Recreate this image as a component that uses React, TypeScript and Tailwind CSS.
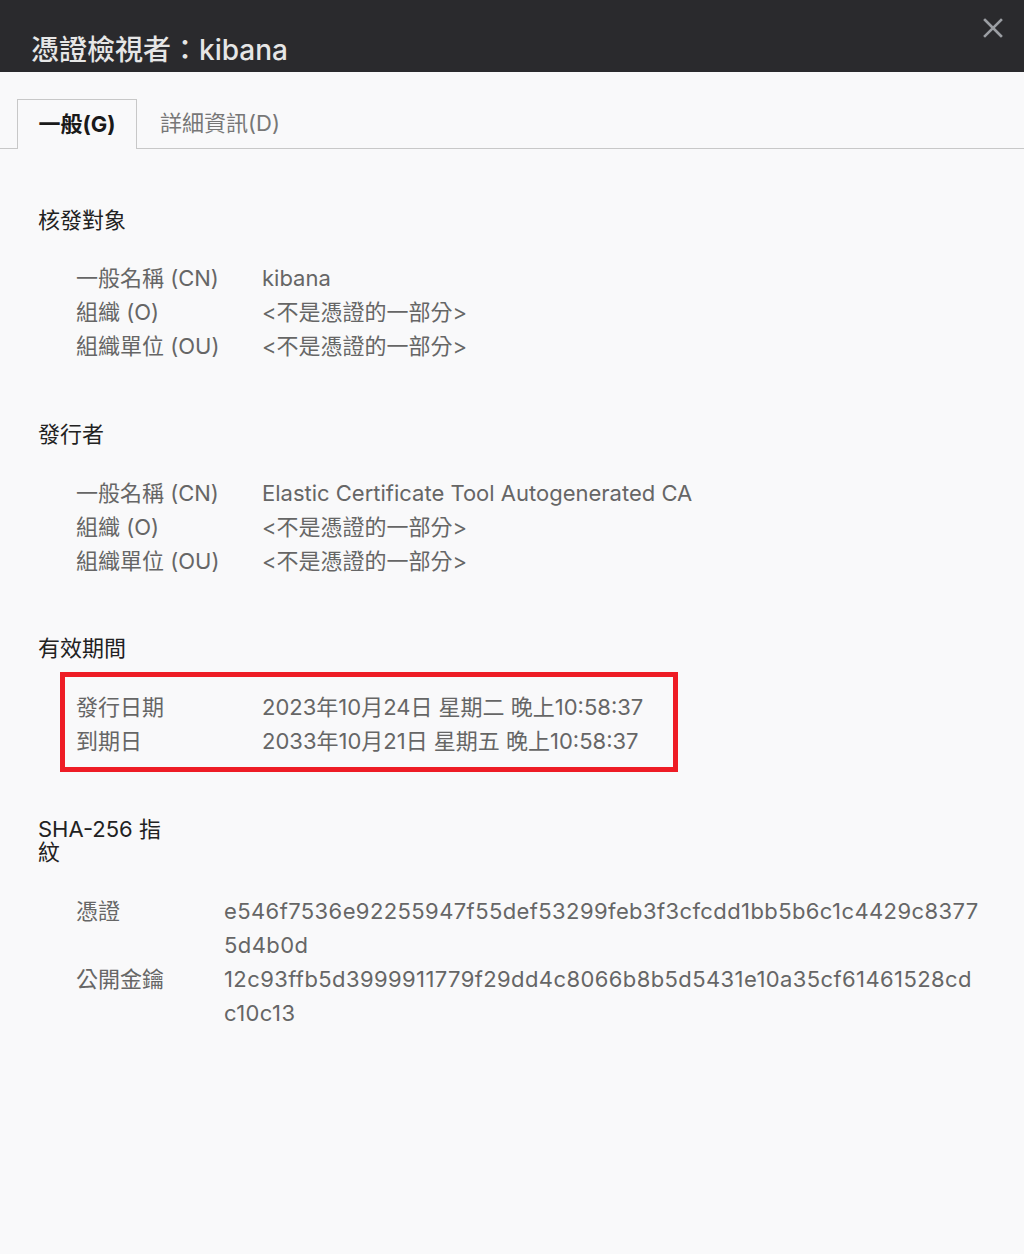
import { Fragment } from "react";

const font = {
  fontFamily: 'Inter, "Noto Sans CJK TC", sans-serif',
};

type Row = { label: string; value: string };

const subject: Row[] = [
  { label: "一般名稱 (CN)", value: "kibana" },
  { label: "組織 (O)", value: "<不是憑證的一部分>" },
  { label: "組織單位 (OU)", value: "<不是憑證的一部分>" },
];

const issuer: Row[] = [
  { label: "一般名稱 (CN)", value: "Elastic Certificate Tool Autogenerated CA" },
  { label: "組織 (O)", value: "<不是憑證的一部分>" },
  { label: "組織單位 (OU)", value: "<不是憑證的一部分>" },
];

const validity: Row[] = [
  { label: "發行日期", value: "2023年10月24日 星期二 晚上10:58:37" },
  { label: "到期日", value: "2033年10月21日 星期五 晚上10:58:37" },
];

const fingerprints: Row[] = [
  {
    label: "憑證",
    value: "e546f7536e92255947f55def53299feb3f3cfcdd1bb5b6c1c4429c83775d4b0d",
  },
  {
    label: "公開金鑰",
    value: "12c93ffb5d3999911779f29dd4c8066b8b5d5431e10a35cf61461528cdc10c13",
  },
];

function Rows({ rows, cols, valueClass = "" }: { rows: Row[]; cols: string; valueClass?: string }) {
  return (
    <div className={`grid ${cols} text-[22px] leading-[34px] text-[#666]`}>
      {rows.map((r) => (
        <Fragment key={r.label}>
          <div>{r.label}</div>
          <div className={`break-all ${valueClass}`}>{r.value}</div>
        </Fragment>
      ))}
    </div>
  );
}

function Heading({ children }: { children: React.ReactNode }) {
  return (
    <h2 className="text-[22px] leading-[34px] font-normal text-[#222]">
      {children}
    </h2>
  );
}

export default function App() {
  return (
    <div className="min-h-[1254px] w-[1024px] bg-[#f9f9fa]" style={font}>
      {/* Title bar */}
      <div className="relative flex h-[72px] items-end bg-[#2a2a2d] pb-[5px] pl-[31px]">
        <h1 className="text-[28px] leading-[34px] font-medium text-[#e6e6e6]">
          憑證檢視者：kibana
        </h1>
        <button type="button" className="absolute right-[21px] top-[18px] h-[20px] w-[20px]">
          <svg viewBox="0 0 20 20" className="h-[20px] w-[20px]">
            <path
              d="M2 2 L18 18 M18 2 L2 18"
              stroke="#9b9ea3"
              strokeWidth="2.6"
              strokeLinecap="square"
            />
          </svg>
        </button>
      </div>

      {/* Tabs */}
      <div className="flex border-b border-[#c8c8c8] pl-[17px] pt-[27px]">
        <div className="-mb-px flex h-[50px] w-[120px] items-center justify-center border border-b-0 border-[#c8c8c8] bg-[#f9f9fa] text-[22px] font-bold text-[#1a1a1a]">
          一般(G)
        </div>
        <div className="flex h-[49px] items-center pl-[23px] text-[22px] text-[#777]">
          詳細資訊(D)
        </div>
      </div>

      {/* Content */}
      <div className="pl-[38px] pr-[34px]">
        <div className="mt-[54px]">
          <Heading>核發對象</Heading>
          <div className="mt-[24px] pl-[38px]">
            <Rows rows={subject} cols="grid-cols-[186px_1fr]" />
          </div>
        </div>

        <div className="mt-[54px]">
          <Heading>發行者</Heading>
          <div className="mt-[25px] pl-[38px]">
            <Rows rows={issuer} cols="grid-cols-[186px_1fr]" />
          </div>
        </div>

        <div className="mt-[53px]">
          <Heading>有效期間</Heading>
          <div className="ml-[22px] mt-[7px] w-[618px] border-[5px] border-[#ee1c25] pb-[9px] pl-[11px] pt-[13px]">
            <Rows rows={validity} cols="grid-cols-[186px_1fr]" />
          </div>
        </div>

        <div className="mt-[46px]">
          <h2 className="w-[140px] text-[22px] leading-[23px] font-normal text-[#222]">
            SHA-256 指<br />紋
          </h2>
          <div className="mt-[30px] pl-[38px]">
            <Rows rows={fingerprints} cols="grid-cols-[148px_757px]" valueClass="tracking-[0.4px]" />
          </div>
        </div>
      </div>
    </div>
  );
}
